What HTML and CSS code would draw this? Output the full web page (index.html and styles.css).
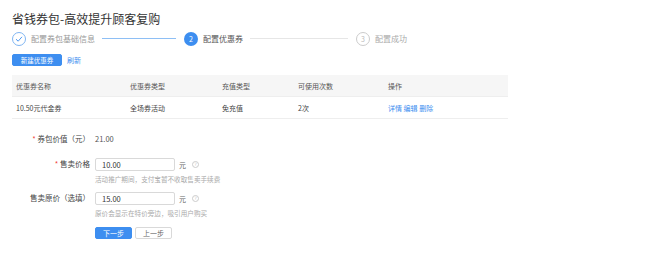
FILE: index.html
```html
<!DOCTYPE html>
<html lang="zh-CN">
<head>
    <meta charset="UTF-8">
    <meta name="viewport" content="width=device-width, initial-scale=1.0">
    <title>省钱券包</title>
    <link rel="stylesheet" href="styles.css">
</head>
<body>
    <div class="page">
        <div class="page-title">省钱券包-高效提升顾客复购</div>

        <!-- steps -->
        <div class="steps">
            <div class="step done">
                <span class="step-icon">
                    <svg width="8" height="8" viewBox="0 0 8 8"><path d="M1 4.2 L3.2 6.2 L7 1.8" fill="none" stroke="#3d8ef0" stroke-width="0.9"/></svg>
                </span>
                <span class="step-text">配置券包基础信息</span>
            </div>
            <div class="step-line line-done"></div>
            <div class="step active">
                <span class="step-icon">2</span>
                <span class="step-text">配置优惠券</span>
            </div>
            <div class="step-line line-wait"></div>
            <div class="step wait">
                <span class="step-icon">3</span>
                <span class="step-text">配置成功</span>
            </div>
        </div>

        <div class="toolbar">
            <button class="btn btn-primary btn-new">新建优惠券</button>
            <a class="link">刷新</a>
        </div>

        <table class="coupon-table">
            <tr>
                <th class="col-name">优惠券名称</th>
                <th class="col-type">优惠券类型</th>
                <th class="col-charge">充值类型</th>
                <th class="col-times">可使用次数</th>
                <th>操作</th>
            </tr>
            <tr>
                <td>10.50元代金券</td>
                <td>全场券活动</td>
                <td>免充值</td>
                <td>2次</td>
                <td><a class="link">详情</a> <a class="link">编辑</a> <a class="link">删除</a></td>
            </tr>
        </table>

        <!-- form -->
        <div class="form">
            <div class="form-row row-value">
                <div class="form-label"><span class="req">*</span> 券包价值（元）</div>
                <div class="form-text">21.00</div>
            </div>
            <div class="form-row row-price">
                <div class="form-label"><span class="req">*</span> 售卖价格</div>
                <div class="form-field">
                    <div class="field-line">
                        <input class="form-input" type="text" value="10.00">
                        <span class="unit">元</span>
                        <span class="help">?</span>
                    </div>
                    <div class="hint">活动推广期间，支付宝暂不收取售卖手续费</div>
                </div>
            </div>
            <div class="form-row row-origin">
                <div class="form-label">售卖原价（选填）</div>
                <div class="form-field">
                    <div class="field-line">
                        <input class="form-input" type="text" value="15.00">
                        <span class="unit">元</span>
                        <span class="help">?</span>
                    </div>
                    <div class="hint">原价会显示在特价旁边，吸引用户购买</div>
                </div>
            </div>
            <div class="form-row row-actions">
                <div class="form-label"></div>
                <div class="actions">
                    <button class="btn btn-primary btn-step">下一步</button>
                    <button class="btn btn-default btn-step">上一步</button>
                </div>
            </div>
        </div>
    </div>
</body>
</html>
```

FILE: styles.css
```css
body {
    margin: 0;
    font-family: "Noto Sans CJK SC", "Liberation Sans", sans-serif;
    color: #333;
    background: #fff;
}
.page {
    padding: 10px 12px 0 12px;
}
.page-title {
    font-size: 12px;
    line-height: 17px;
    color: #333;
}

/* steps */
.steps {
    display: flex;
    align-items: center;
    margin-top: 4px;
    height: 15px;
}
.step {
    display: flex;
    align-items: center;
}
.step-icon {
    width: 14px;
    height: 14px;
    border-radius: 50%;
    display: flex;
    align-items: center;
    justify-content: center;
    font-size: 7px;
    box-sizing: border-box;
}
.step-text {
    font-size: 8px;
    margin-left: 5px;
}
.done .step-icon {
    border: 1px solid #7fb5f2;
}
.done .step-text {
    color: #999;
}
.active .step-icon {
    background: #3d8ef0;
    color: #fff;
}
.active .step-text {
    color: #555;
}
.wait .step-icon {
    border: 1px solid #ccc;
    color: #bbb;
}
.wait .step-text {
    color: #aaa;
}
.step-line {
    height: 1px;
    margin: 0 8px 0 7px;
}
.line-done {
    width: 74px;
    background: #8ebff5;
}
.line-wait {
    width: 98px;
    background: #e6e6e6;
}

/* toolbar */
.toolbar {
    display: flex;
    align-items: center;
    margin-top: 8px;
}
.btn {
    font-family: inherit;
    border-radius: 2px;
    cursor: pointer;
    padding: 0;
}
.btn-primary {
    background: #3d8ef0;
    border: 1px solid #3d8ef0;
    color: #fff;
}
.btn-default {
    background: #fff;
    border: 1px solid #d9d9d9;
    color: #666;
}
.btn-new {
    width: 50px;
    height: 12px;
    font-size: 6.5px;
}
.link {
    color: #3d8ef0;
    font-size: 7px;
    cursor: pointer;
}
.toolbar .link {
    margin-left: 5px;
}

/* table */
.coupon-table {
    width: 496px;
    border-collapse: collapse;
    margin-top: 9px;
    table-layout: fixed;
    font-size: 7px;
}
.coupon-table th,
.coupon-table td {
    text-align: left;
    font-weight: normal;
    padding: 0 0 0 4px;
    height: 21px;
    border-bottom: 1px solid #eee;
}
.coupon-table th {
    background: #f6f6f6;
    color: #555;
}
.coupon-table td {
    color: #444;
}
.col-name { width: 110px; }
.col-type { width: 88px; }
.col-charge { width: 72px; }
.col-times { width: 86px; }

/* form */
.form {
    margin-top: 14px;
}
.form-row {
    display: flex;
    align-items: flex-start;
}
.form-label {
    width: 78px;
    text-align: right;
    font-size: 7.5px;
    color: #444;
    line-height: 12px;
    margin-right: 5px;
    flex-shrink: 0;
}
.req {
    color: #f04134;
}
.form-text {
    font-size: 7.5px;
    line-height: 12px;
    color: #555;
}
.row-price {
    margin-top: 13px;
}
.row-origin {
    margin-top: 8px;
}
.row-actions {
    margin-top: 9px;
}
.field-line {
    display: flex;
    align-items: center;
}
.form-input {
    width: 80px;
    height: 13px;
    box-sizing: border-box;
    border: 1px solid #d9d9d9;
    border-radius: 2px;
    padding: 0 6px;
    font-family: inherit;
    font-size: 7.5px;
    color: #333;
    outline: none;
}
.unit {
    font-size: 7px;
    color: #666;
    margin-left: 4px;
}
.help {
    width: 7px;
    height: 7px;
    box-sizing: border-box;
    border: 1px solid #ccc;
    border-radius: 50%;
    font-size: 4.5px;
    line-height: 5px;
    text-align: center;
    color: #bbb;
    margin-left: 6px;
}
.hint {
    font-size: 6.6px;
    color: #aaa;
    line-height: 10px;
    margin-top: 3px;
}
.actions {
    display: flex;
}
.btn-step {
    width: 37px;
    height: 12px;
    font-size: 7px;
    margin-right: 3px;
}
```
